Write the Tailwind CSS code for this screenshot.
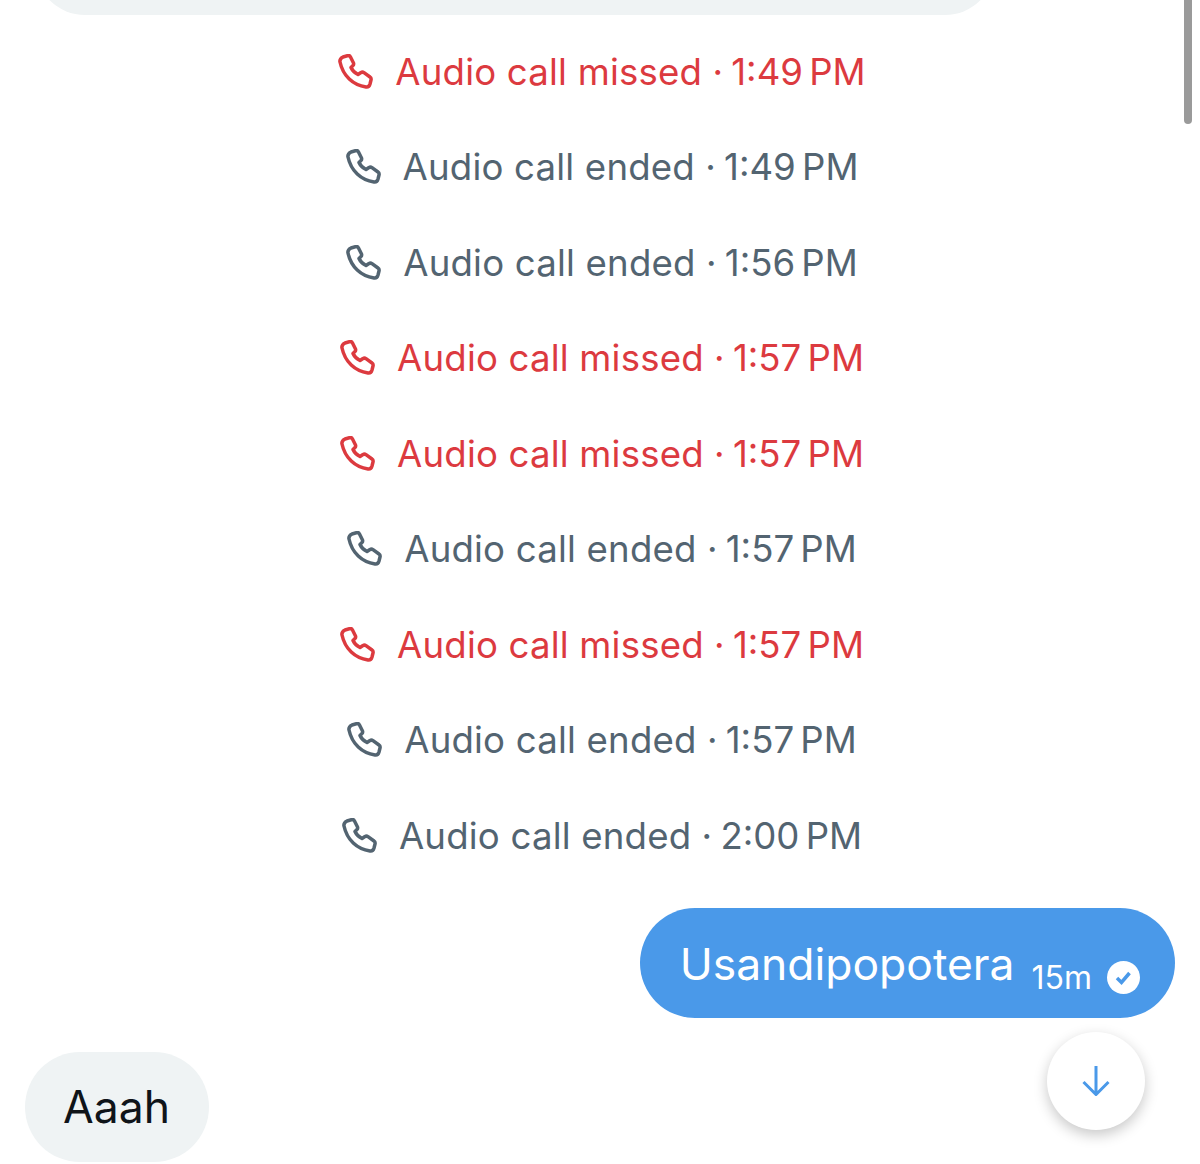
<!DOCTYPE html>
<html lang="en">
<head>
    <meta charset="UTF-8">
    <title>Messages</title>
    <script src="https://cdn.jsdelivr.net/npm/@tailwindcss/browser@4"></script>
</head>
<body class="bg-white">
    <div class="relative w-[1200px] h-[1164px] overflow-hidden font-['Inter',sans-serif]">
        <!-- bubble scrolled off the top -->
        <div class="mx-[35px] w-[960px] h-[100px] -mt-[85px] rounded-[50px] bg-[#eff3f4]"></div>

        <div id="calls" class="flex flex-col items-center w-[1200px] pl-[4px] pt-[9px] text-[36.600px] leading-[95.5px]">
            <!-- call rows are inserted here -->
        </div>

        <div class="flex justify-end pr-[25px] mt-[24px]">
            <div class="flex items-center h-[110px] pl-[40px] pr-[35px] rounded-[55px] bg-[#4a99e9] text-white">
                <span class="text-[44.400px] leading-[56px] mt-[2px]">Usandipopotera</span>
                <span class="text-[32px] leading-[40px] ml-[17px] mt-[30px]">15m</span>
                <svg class="w-[33px] h-[33px] ml-[15px] mt-[30px]" viewBox="0 0 33 33"><circle cx="16.500" cy="16.500" r="16.500" fill="#fff"/><path d="M10 17l4.500 4.500 8-9.500" fill="none" stroke="#4a99e9" stroke-width="3.500"/></svg>
            </div>
        </div>

        <div class="flex justify-start pl-[25px] mt-[34px]">
            <div class="flex items-center h-[110px] px-[39px] rounded-[55px] bg-[#eff3f4] text-[#0f1419] text-[44.500px]"><span class="mt-[1px] -ml-[1px]">Aaah</span></div>
        </div>

        <!-- overlays -->
        <div class="absolute top-[-10px] left-[1184px] w-[8px] h-[134px] rounded-full bg-[#9a9a9a]"></div>
        <div class="absolute top-[1032px] left-[1047px] w-[98px] h-[98px] rounded-full bg-white shadow-[0_5px_14px_rgba(0,0,0,0.22)] flex items-center justify-center">
            <svg class="w-[30px] h-[30px]" viewBox="0 0 30 30" fill="none" stroke="#4a99e9" stroke-width="3"><path d="M15 0v28M2.500 16l12.500 12.500 12.500-12.500"/></svg>
        </div>
    </div>

    <script>
        const calls = [
            ['missed', '1:49 PM'],
            ['ended', '1:49 PM'],
            ['ended', '1:56 PM'],
            ['missed', '1:57 PM'],
            ['missed', '1:57 PM'],
            ['ended', '1:57 PM'],
            ['missed', '1:57 PM'],
            ['ended', '1:57 PM'],
            ['ended', '2:00 PM'],
        ];

        const phone = 'M2 8C1.500 5.500 3 4 5 3l5-1.500q1.500-.3 2.500 1.500l3 6q.5 1.500-.5 2.500l-2 2q2 4.500 7 7l3-2q1.500-.8 3 .2l6 4.300q1.500 1 1 3l-1 4q-1 3.500-4 3C15 31 5 22 2 8z';

        const list = document.getElementById('calls');
        calls.forEach(([kind, time]) => {
            const row = document.createElement('div');
            const colour = kind === 'missed' ? 'text-[#dc3a3f]' : 'text-[#536471]';
            row.className = `flex items-center h-[95.5px] ${colour}`;
            row.innerHTML = `
                <svg class="w-[36px] h-[36px] mr-[21px]" viewBox="0 0 36 36" fill="none" stroke="currentColor" stroke-width="3.500" stroke-linejoin="round"><path d="${phone}"/></svg>
                <span class="mt-[1px]"><span class="tracking-[0.2px]">Audio call ${kind}</span> · <span class="-ml-[2px] [word-spacing:-4px]">${time}</span></span>
            `;
            list.appendChild(row);
        });
    </script>
</body>
</html>
